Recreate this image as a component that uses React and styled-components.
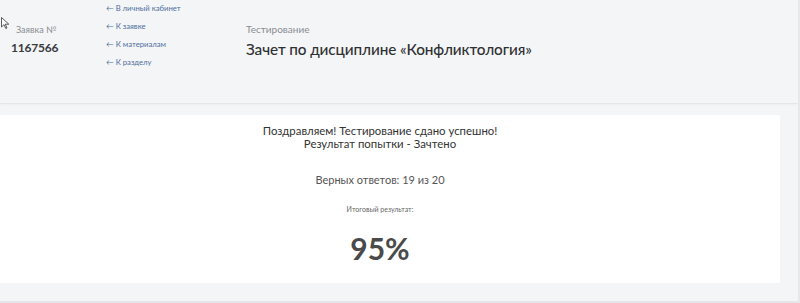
import styled, { createGlobalStyle } from "styled-components";

const GlobalStyle = createGlobalStyle`
  html, body {
    margin: 0;
    padding: 0;
    background: #f4f5f7;
    font-family: "Lato", "Open Sans", sans-serif;
  }
`;

const Page = styled.div`
  position: relative;
  width: 800px;
  height: 303px;
  overflow: hidden;
  background: #f4f5f7;
  border-right: 2px solid #e6e8ec;
  box-sizing: border-box;
`;

const Header = styled.header`
  display: flex;
  height: 104px;
  border-bottom: 1px solid #e4e6ea;
  box-shadow: 0 1px 2px rgba(0, 0, 0, 0.03);
  box-sizing: border-box;
`;

const Order = styled.div`
  width: 90px;
  padding: 24px 0 0 11px;
  box-sizing: border-box;
`;

const OrderLabel = styled.div`
  font-size: 9px;
  color: #8a8d92;
  padding-left: 5px;
`;

const OrderNumber = styled.div`
  font-size: 12px;
  font-weight: 700;
  color: #3a3b3d;
  margin-top: 5px;
  letter-spacing: -0.2px;
`;

const Links = styled.nav`
  display: flex;
  flex-direction: column;
  gap: 7px;
  padding: 3px 0 0 16px;
  width: 140px;
`;

const BackLink = styled.a`
  font-size: 7.7px;
  line-height: 11px;
  color: #4e6f9c;
  text-decoration: none;
`;

const Heading = styled.div`
  padding-top: 23px;
`;

const Kind = styled.div`
  font-size: 10px;
  color: #8a8d92;
`;

const Title = styled.h1`
  margin: 5px 0 0;
  font-size: 15.3px;
  font-weight: 500;
  color: #2f3033;
  letter-spacing: -0.1px;
`;

const Content = styled.main`
  padding: 11px 18px 18px 0;
  border-bottom: 2px solid #e4e6ea;
`;

const Card = styled.section`
  background: #ffffff;
  height: 168px;
  padding-right: 20px;
  display: flex;
  flex-direction: column;
  align-items: center;
  text-align: center;
  color: #3a3b3d;
  border-radius: 0 2px 2px 0;
`;

const Message = styled.div`
  margin-top: 9px;
  font-size: 11.4px;
  line-height: 13px;
  color: #333;
`;

const Score = styled.div`
  margin-top: 23px;
  font-size: 11px;
  color: #555;
`;

const ResultLabel = styled.div`
  margin-top: 19px;
  font-size: 7px;
  color: #666;
`;

const Percent = styled.div`
  margin-top: 17px;
  font-size: 30px;
  font-weight: 700;
  color: #4a4a4a;
`;

const Cursor = styled.svg`
  position: absolute;
  left: 1px;
  top: 17px;
`;

export default function App() {
  return (
    <>
      <GlobalStyle />
      <Page>
        <Cursor width="9" height="13" viewBox="0 0 9 13">
          <path d="M0.5 0.5 L0.5 10 L3 7.6 L4.8 11.5 L6 11 L4.3 7.2 L7.8 7.2 Z" fill="#fff" stroke="#333" strokeWidth="0.8" />
        </Cursor>
        <Header>
          <Order>
            <OrderLabel>Заявка №</OrderLabel>
            <OrderNumber>1167566</OrderNumber>
          </Order>
          <Links>
            <BackLink href="#">← В личный кабинет</BackLink>
            <BackLink href="#">← К заявке</BackLink>
            <BackLink href="#">← К материалам</BackLink>
            <BackLink href="#">← К разделу</BackLink>
          </Links>
          <Heading>
            <Kind>Тестирование</Kind>
            <Title>Зачет по дисциплине «Конфликтология»</Title>
          </Heading>
        </Header>
        <Content>
          <Card>
            <Message>
              Поздравляем! Тестирование сдано успешно!
              <br />
              Результат попытки - Зачтено
            </Message>
            <Score>Верных ответов: 19 из 20</Score>
            <ResultLabel>Итоговый результат:</ResultLabel>
            <Percent>95%</Percent>
          </Card>
        </Content>
      </Page>
    </>
  );
}
